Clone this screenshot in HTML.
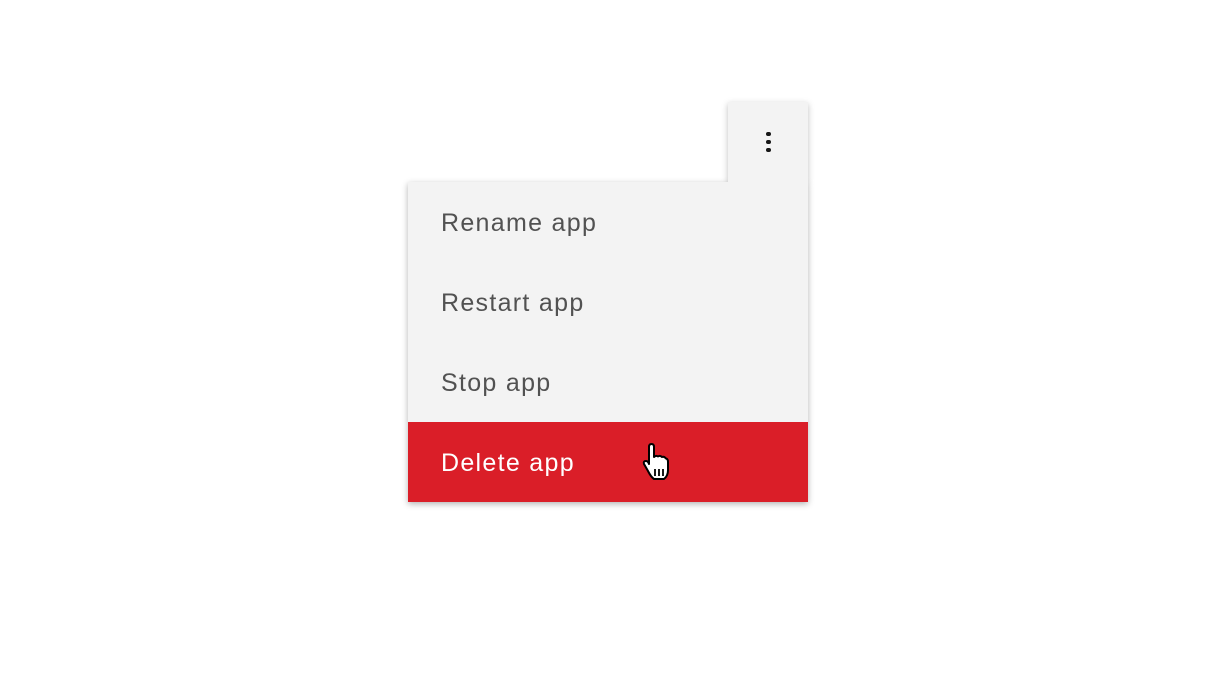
<!DOCTYPE html>
<html><head><style>
body{margin:0;width:1216px;height:684px;background:#fff;position:relative;overflow:hidden;font-family:"Liberation Sans",sans-serif}
.btn{position:absolute;left:728px;top:102px;width:80px;height:80px;background:#f3f3f3;box-shadow:0 2px 6px rgba(0,0,0,.25)}
.menu{position:absolute;left:408px;top:182px;width:400px;height:320px;background:#f3f3f3;box-shadow:0 2px 6px rgba(0,0,0,.3)}
.cover{position:absolute;left:728px;top:170px;width:80px;height:20px;background:#f3f3f3}
.it{height:80px;line-height:82px;padding-left:33px;font-size:25px;color:#525252;letter-spacing:1.3px}
.del{background:#da1e28;color:#fff}
.dot{position:absolute;left:766px;width:4.5px;height:4.5px;border-radius:50%;background:#161616}
</style></head><body>
<div class="btn"></div>
<div class="menu">
<div class="it">Rename app</div>
<div class="it">Restart app</div>
<div class="it">Stop app</div>
<div class="it del">Delete app</div>
</div>
<div class="cover"></div>
<div class="dot" style="top:131.5px"></div>
<div class="dot" style="top:139.5px"></div>
<div class="dot" style="top:147.5px"></div>
<svg style="position:absolute;left:640px;top:443px" width="36" height="40" viewBox="0 0 36 40">
<path d="M9 4 Q9 1 11.5 1 Q14 1 14 4 V14 Q16 12 18 13.5 Q20 12 22 14 Q24 13 26 15.5 Q28 16 28 19 V27 Q28 33 24 36 H14 Q11 34 8 28 L4 21 Q3 18 6 18 Q8 18 9 21 Z" fill="#fff" stroke="#000" stroke-width="2" stroke-linejoin="round"/>
<path d="M15 26 V33 M19 26 V33 M23 26 V33" stroke="#000" stroke-width="1.8"/>
</svg>
</body></html>
